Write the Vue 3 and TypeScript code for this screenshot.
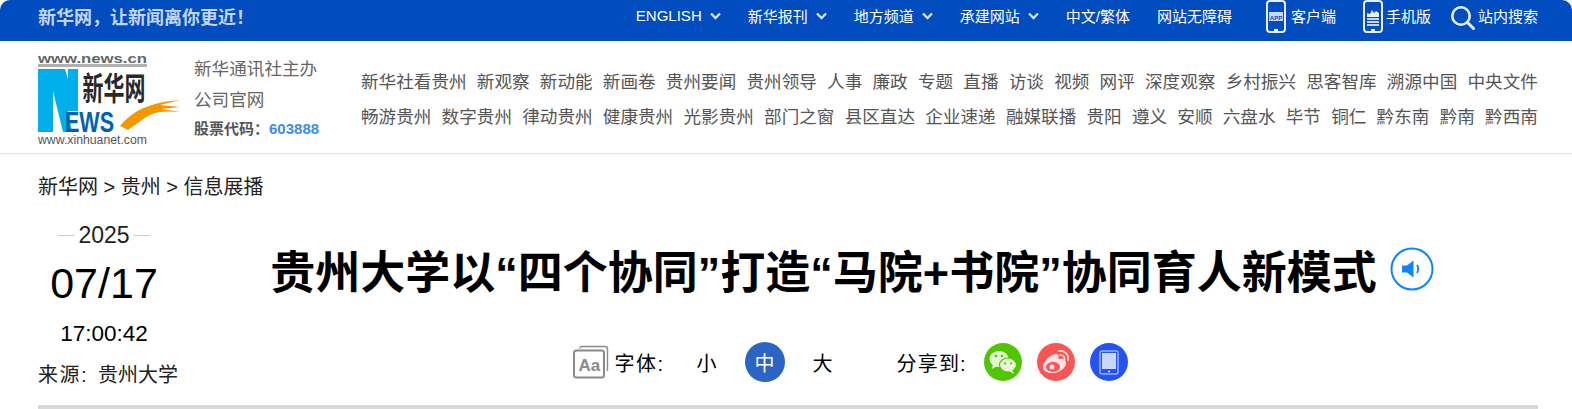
<script setup lang="ts">
const navRows: string[][] = [
  ['新华社看贵州', '新观察', '新动能', '新画卷', '贵州要闻', '贵州领导', '人事', '廉政', '专题', '直播', '访谈', '视频', '网评', '深度观察', '乡村振兴', '思客智库', '溯源中国', '中央文件'],
  ['畅游贵州', '数字贵州', '律动贵州', '健康贵州', '光影贵州', '部门之窗', '县区直达', '企业速递', '融媒联播', '贵阳', '遵义', '安顺', '六盘水', '毕节', '铜仁', '黔东南', '黔南', '黔西南'],
]
const menus = ['ENGLISH', '新华报刊', '地方频道', '承建网站']
const links = ['中文/繁体', '网站无障碍']
</script>

<template>
  <div class="page">
    <div class="topbar">
      <div class="slogan">新华网，让新闻离你更近！</div>
      <div class="top-right">
        <span v-for="m in menus" :key="m" class="top-item">
          {{ m }}
          <svg class="chev" width="11" height="8" viewBox="0 0 11 8" fill="none" stroke="#d5e0f5" stroke-width="2.4"><path d="M1 1.5l4.5 4.5L10 1.5" /></svg>
        </span>
        <span v-for="l in links" :key="l" class="top-item">{{ l }}</span>
        <span class="top-item icon-item app-item">
          <svg class="phone" width="20" height="33" viewBox="0 0 20 33">
            <rect x="1" y="1" width="18" height="31" rx="3" fill="none" stroke="#e8eefa" stroke-width="2" />
            <rect x="3" y="12" width="14" height="9" fill="#c9d8f4" />
            <text x="10" y="19.500" class="app-text" text-anchor="middle">APP</text>
            <rect x="8" y="29" width="4" height="2" fill="#e8eefa" />
          </svg>
          <span>客户端</span>
        </span>
        <span class="top-item icon-item">
          <svg class="phone" width="20" height="33" viewBox="0 0 20 33">
            <rect x="1" y="1" width="18" height="31" rx="3" fill="none" stroke="#e8eefa" stroke-width="2" />
            <path d="M4 17v-4l3 1 2-4 2 3 2-2 3 2v4z" fill="#e8eefa" />
            <path d="M4 19h12M4 22h12M4 25h12" stroke="#c5d4f0" stroke-width="2" />
            <rect x="8" y="29" width="4" height="2" fill="#e8eefa" />
          </svg>
          <span>手机版</span>
        </span>
        <span class="top-item icon-item search-item">
          <svg class="glass" width="25" height="25" viewBox="0 0 25 25" fill="none" stroke="#e8eefa" stroke-width="2.6">
            <circle cx="11" cy="11" r="8.700" />
            <path d="M17.500 17.500l6 6" stroke-linecap="round" stroke-width="3" />
          </svg>
          <span>站内搜索</span>
        </span>
      </div>
    </div>

    <header class="header">
      <svg class="logo" width="144" height="94" viewBox="0 0 144 94">
        <text x="0" y="9.500" class="logo-url" textLength="109" lengthAdjust="spacingAndGlyphs">www.news.cn</text>
        <rect x="0" y="11" width="109" height="3" fill="#b0b0b0" />
        <path d="M0 16h15v63H0z" fill="#00aeea" />
        <path d="M15 16h12l3 10V16h10v42H30l4 21h-9L15 38z" fill="#00aeea" />
        <text transform="translate(44.500 47) scale(1 1.500)" class="logo-cn">新华网</text>
        <text x="27" y="79" class="logo-ews" textLength="49" lengthAdjust="spacingAndGlyphs">EWS</text>
        <path d="M82 73C92 62 104 50 142 47l-20 5 20 2-18 2 18 3c-12-1-22-1-30 3-8 4-14 10-22 15z" fill="#f39800" />
        <text x="0" y="91" class="logo-foot" textLength="109" lengthAdjust="spacingAndGlyphs">www.xinhuanet.com</text>
      </svg>
      <div class="org">
        <div>新华通讯社主办</div>
        <div>公司官网</div>
        <div class="stock">股票代码：<b>603888</b></div>
      </div>
      <nav class="nav">
        <div v-for="(row, i) in navRows" :key="i" class="nav-row">
          <a v-for="n in row" :key="n">{{ n }}</a>
        </div>
      </nav>
    </header>

    <main class="main">
      <div class="crumb">新华网 &gt; 贵州 &gt; 信息展播</div>
      <div class="article-head">
        <div class="date">
          <div class="year"><i></i><span>2025</span><i></i></div>
          <div class="day">07/17</div>
          <div class="time">17:00:42</div>
          <div class="source"><span class="source-label">来源:</span>贵州大学</div>
        </div>
        <div class="head-main">
          <h1 class="title">
            <span>贵州大学以“四个协同”打造“马院+书院”协同育人新模式</span>
            <svg class="speaker" width="44" height="44" viewBox="0 0 44 44">
              <circle cx="22" cy="22" r="20.500" fill="none" stroke="#0a84ff" stroke-width="2" />
              <path d="M12 18.500h5l6.500-5v17l-6.500-5h-5z" fill="#0a84ff" />
              <path d="M27 18c1.500 2.500 1.500 5.500 0 8" fill="none" stroke="#0a84ff" stroke-width="1.800" />
            </svg>
          </h1>
          <div class="tools">
            <svg class="font-icon" width="36" height="34" viewBox="0 0 36 34">
              <path d="M7 3.500Q7 1.500 9 1.500h23q2.500 0 2.500 2.500v22" fill="none" stroke="#8a8a8a" stroke-width="1.400" />
              <rect x="1" y="5.500" width="30" height="27" rx="2.500" fill="#fff" stroke="#8a8a8a" stroke-width="2" />
              <text x="5.500" y="25.500" class="aa">Aa</text>
            </svg>
            <span class="tool-label">字体:</span>
            <span class="size">小</span>
            <span class="size active">中</span>
            <span class="size">大</span>
            <span class="share-label">分享到:</span>
            <svg class="share" width="38" height="38" viewBox="0 0 38 38">
              <circle cx="19" cy="19" r="19" fill="#4fc600" />
              <ellipse cx="15" cy="16" rx="9.500" ry="8" fill="#e5f7d5" />
              <path d="M9 21l-1 5 5-3z" fill="#e5f7d5" />
              <ellipse cx="24" cy="22" rx="8.500" ry="7" fill="#e5f7d5" stroke="#4fc600" stroke-width="1.200" />
              <path d="M28 27l2 4-5-3z" fill="#e5f7d5" />
              <circle cx="12" cy="13" r="1.300" fill="#4fc600" />
              <circle cx="18" cy="13" r="1.300" fill="#4fc600" />
              <circle cx="21" cy="20.500" r="1.100" fill="#4fc600" />
              <circle cx="27" cy="20.500" r="1.100" fill="#4fc600" />
            </svg>
            <svg class="share" width="38" height="38" viewBox="0 0 38 38">
              <circle cx="19" cy="19" r="19" fill="#fa5555" />
              <path d="M6 24c0-6 8-13 13-13 3 0 3 3 2 5 5-1 8 1 8 4 0 6-8 10-13 10-6 0-10-2-10-6z" fill="#fde3e3" />
              <ellipse cx="16" cy="24" rx="7" ry="5" fill="#fa5555" />
              <circle cx="15" cy="24" r="2.500" fill="#fde3e3" />
              <path d="M22 8c5-1 10 3 9 9M23 12c3-.5 5 2 4.500 5" fill="none" stroke="#fde3e3" stroke-width="1.600" stroke-linecap="round" />
            </svg>
            <svg class="share" width="38" height="38" viewBox="0 0 38 38">
              <circle cx="19" cy="19" r="19" fill="#2353f5" />
              <rect x="10" y="8" width="18" height="23" rx="2" fill="#2353f5" stroke="#9db4fb" stroke-width="1.500" />
              <rect x="12" y="10" width="14" height="16" fill="#c9d6fd" />
              <circle cx="19" cy="28.500" r="1" fill="#e5ebff" />
            </svg>
          </div>
        </div>
      </div>
      <div class="rule"></div>
    </main>
  </div>
</template>

<style>
html,
body {
  margin: 0;
  background: #fff;
  overflow: hidden;
}
</style>

<style scoped>
.page {
  width: 1572px;
  height: 409px;
  overflow: hidden;
  font-family: "Liberation Sans", "Noto Sans CJK SC", sans-serif;
  color: #000;
}

.topbar {
  box-sizing: border-box;
  height: 41px;
  background: #014cbf;
  border-radius: 10px 10px 0 0;
  display: flex;
  align-items: center;
  justify-content: space-between;
  padding: 0 34px 10px 38px;
  color: #fff;
}

.slogan {
  font-size: 18px;
  font-weight: 700;
  color: #c4d5f2;
}

.top-right {
  display: flex;
  align-items: center;
  gap: 27px;
  font-size: 14px;
}

.top-item {
  display: flex;
  align-items: center;
  gap: 8px;
  white-space: nowrap;
  font-size: 15px;
}

.icon-item {
  gap: 3px;
}

.app-item {
  gap: 5px;
  margin-left: 7px;
}

.phone {
  margin-top: 2px;
}

.glass {
  margin-top: 4px;
}

.app-text {
  font: 700 6px "Liberation Sans", sans-serif;
  fill: #014cbf;
}

.search-item {
  margin-left: -8px;
}

.header {
  height: 112px;
  border-bottom: 1px solid #e2e2e2;
  display: flex;
  align-items: center;
  padding: 0 34px 0 38px;
}

.logo {
  flex: none;
  margin-top: 6px;
  overflow: visible;
}

.logo-url {
  font: 700 13px "Liberation Sans", sans-serif;
  fill: #666;
}

.logo-cn {
  font: 700 21px "Noto Sans CJK SC", sans-serif;
  fill: #2c2626;
}

.logo-ews {
  font: 700 29px "Liberation Sans", sans-serif;
  fill: #0062ac;
}

.logo-foot {
  font: 400 12px "Liberation Sans", sans-serif;
  fill: #555;
}

.org {
  flex: none;
  width: 167px;
  margin: 1px 0 0 12px;
  font-size: 17.600px;
  line-height: 31px;
  color: #666;
}

.stock {
  font-size: 15px;
  line-height: 26px;
  font-weight: 700;
  color: #555;
}

.stock b {
  color: #3d8bf0;
}

.nav {
  flex: 1;
  display: flex;
  flex-direction: column;
  gap: 10px;
  margin-top: 5px;
}

.nav-row {
  display: flex;
  justify-content: space-between;
  font-size: 17.600px;
  line-height: 25px;
  color: #555;
  white-space: nowrap;
}

.main {
  padding: 0 34px 0 38px;
}

.crumb {
  font-size: 20px;
  line-height: 28px;
  margin-top: 19px;
  color: #222;
}

.article-head {
  display: flex;
  margin: 21px 4px 0 0;
  height: 181px;
}

.date {
  flex: none;
  width: 132px;
  white-space: nowrap;
}

.year {
  display: flex;
  align-items: center;
  justify-content: center;
  gap: 3px;
  font-size: 23px;
  line-height: 26px;
  color: #222;
}

.year i {
  width: 17px;
  height: 1px;
  background: #ccc;
}

.day {
  font-size: 43px;
  line-height: 50px;
  margin-top: 10px;
  text-align: center;
}

.time {
  font-size: 22.500px;
  line-height: 26px;
  margin-top: 13px;
  text-align: center;
}

.source {
  font-size: 20px;
  line-height: 28px;
  margin-top: 14px;
  color: #222;
}

.source-label {
  display: inline-block;
  width: 60px;
  letter-spacing: 1.500px;
}

.head-main {
  flex: 1;
  display: flex;
  flex-direction: column;
  align-items: center;
}

.title {
  margin: 0;
  display: flex;
  align-items: center;
  gap: 13px;
  height: 94px;
  font-size: 45px;
  font-weight: 700;
  white-space: nowrap;
}

.tools {
  display: flex;
  align-items: center;
  margin-top: 26px;
  padding-right: 4px;
  font-size: 20px;
  height: 40px;
}

.tool-label {
  margin-left: 6px;
  width: 61px;
  letter-spacing: 1.500px;
}

.size {
  width: 40px;
  height: 40px;
  margin-left: 11px;
  border-radius: 50%;
  display: flex;
  align-items: center;
  justify-content: center;
}

.size + .size {
  margin-left: 18px;
}

.size.active {
  background: #2c64c6;
  color: #fff;
}

.share-label {
  margin-left: 54px;
  width: 87px;
  letter-spacing: 1.200px;
}

.share + .share {
  margin-left: 15px;
}

.aa {
  font: 700 17px "Liberation Sans", sans-serif;
  fill: #8a8a8a;
}

.rule {
  height: 4px;
  background: #d9d9d9;
  margin-top: 2px;
}
</style>
